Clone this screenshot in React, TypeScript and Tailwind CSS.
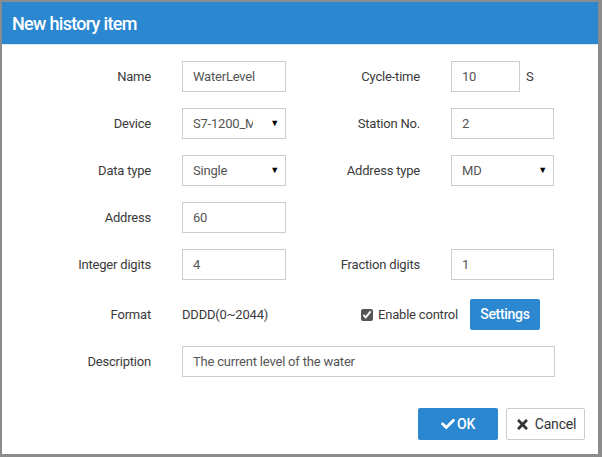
import { FaCheck, FaTimes } from "react-icons/fa";

const font = "font-['Roboto','Liberation_Sans',sans-serif]";

const Label = ({ children, className = "" }: { children: React.ReactNode; className?: string }) => (
    <div className={`text-right text-[13px] text-[#3a3a3a] tracking-[-0.2px] ${className}`}>{children}</div>
);

const Field = ({ value, className = "" }: { value: string; className?: string }) => (
    <div className={`h-[31px] border border-[#ccc] bg-white pl-[10px] flex items-center text-[13px] text-[#555] tracking-[-0.2px] overflow-hidden whitespace-nowrap ${className}`}>
        {value}
    </div>
);

const Select = ({ value, className = "" }: { value: string; className?: string }) => (
    <div className={`h-[31px] border border-[#ccc] bg-white pl-[10px] pr-[6px] flex items-center text-[13px] text-[#555] tracking-[-0.2px] ${className}`}>
        <span className="w-[60px] overflow-hidden whitespace-nowrap">{value}</span>
        <span className="flex-1" />
        <span className="text-[9px] text-black">▼</span>
    </div>
);

export default function App() {
    return (
        <div className={`w-[602px] h-[457px] bg-[#8c8c8c] pt-[2px] pl-[1px] ${font}`}>
            <div className="w-[598px] h-[453px] bg-white border-l border-r border-b border-[#8a8a8a] flex flex-col">
                {/* Cabecera */}
                <div className="h-[43px] bg-[#2a87d0] flex items-center px-[10px] border-b border-[#d6e6f3]">
                    <h1 className="text-[18px] font-medium text-white tracking-[-0.7px]">New history item</h1>
                </div>

                {/* Formulario */}
                <div className="pt-[16px] flex flex-col">
                    <div className="flex items-center h-[31px]">
                        <Label className="w-[149px]">Name</Label>
                        <Field value="WaterLevel" className="ml-[31px] w-[104px]" />
                        <Label className="w-[134px]">Cycle-time</Label>
                        <Field value="10" className="ml-[31px] w-[69px]" />
                        <span className="ml-[6px] text-[13px] text-[#3a3a3a]">S</span>
                    </div>
                    <div className="flex items-center h-[31px] mt-[16px]">
                        <Label className="w-[149px]">Device</Label>
                        <Select value="S7-1200_MB" className="ml-[31px] w-[104px]" />
                        <Label className="w-[134px]">Station No.</Label>
                        <Field value="2" className="ml-[31px] w-[103px]" />
                    </div>
                    <div className="flex items-center h-[31px] mt-[16px]">
                        <Label className="w-[149px]">Data type</Label>
                        <Select value="Single" className="ml-[31px] w-[104px]" />
                        <Label className="w-[134px]">Address type</Label>
                        <Select value="MD" className="ml-[31px] w-[103px]" />
                    </div>
                    <div className="flex items-center h-[31px] mt-[16px]">
                        <Label className="w-[149px]">Address</Label>
                        <Field value="60" className="ml-[31px] w-[104px]" />
                    </div>
                    <div className="flex items-center h-[31px] mt-[16px]">
                        <Label className="w-[149px]">Integer digits</Label>
                        <Field value="4" className="ml-[31px] w-[104px]" />
                        <Label className="w-[134px]">Fraction digits</Label>
                        <Field value="1" className="ml-[31px] w-[103px]" />
                    </div>
                    <div className="flex items-center h-[31px] mt-[19px]">
                        <Label className="w-[149px]">Format</Label>
                        <span className="ml-[31px] w-[104px] text-[13px] text-[#3a3a3a] tracking-[-0.2px]">DDDD(0~2044)</span>
                        <label className="ml-[75px] flex items-center gap-[5px] text-[13px] text-[#3a3a3a] tracking-[-0.2px]">
                            <input type="checkbox" defaultChecked className="w-[12px] h-[12px] m-0 accent-[#555]" />
                            Enable control
                        </label>
                        <button className="ml-[12px] w-[70px] h-[31px] bg-[#2a87d0] text-white text-[14px] font-medium tracking-[-0.3px] rounded-[2px]">
                            Settings
                        </button>
                    </div>
                    <div className="flex items-center h-[31px] mt-[16px]">
                        <Label className="w-[149px]">Description</Label>
                        <Field value="The current level of the water" className="ml-[31px] w-[373px]" />
                    </div>
                </div>

                {/* Botones */}
                <div className="flex justify-end gap-[8px] pr-[13px] mt-[31px]">
                    <button className="w-[80px] h-[32px] bg-[#2a87d0] text-white text-[14px] font-medium tracking-[-0.3px] rounded-[2px] flex items-center justify-center gap-[2px]">
                        <FaCheck className="text-[14px]" /> OK
                    </button>
                    <button className="w-[79px] h-[32px] bg-white border border-[#ccc] text-[#333] text-[14px] tracking-[-0.2px] rounded-[2px] flex items-center justify-center gap-[5px]">
                        <FaTimes className="text-[15px]" /> Cancel
                    </button>
                </div>
            </div>
        </div>
    );
}
